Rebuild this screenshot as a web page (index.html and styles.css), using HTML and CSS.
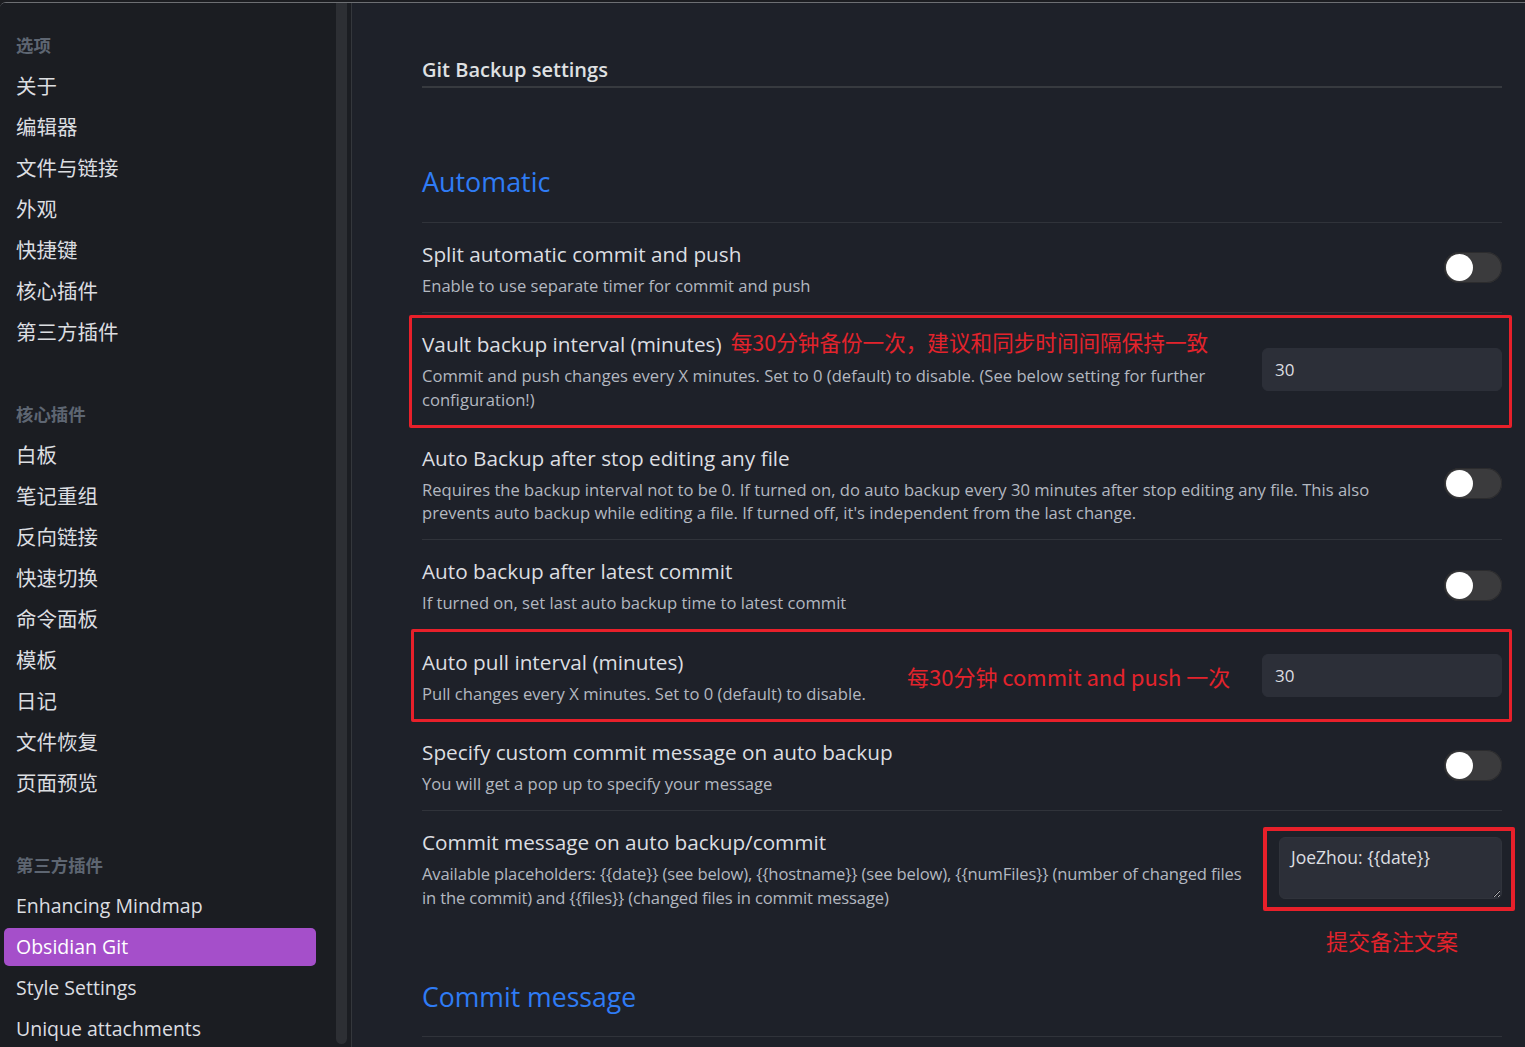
FILE: index.html
```html
<!DOCTYPE html>
<html lang="zh-CN">
<head>
<meta charset="utf-8">
<title>Git Backup settings</title>
<link rel="stylesheet" href="styles.css">
</head>
<body>
<div class="window">
  <aside class="sidebar">
    <nav class="nav">
      <div class="group">
        <div class="group-title">选项</div>
        <div class="item">关于</div>
        <div class="item">编辑器</div>
        <div class="item">文件与链接</div>
        <div class="item">外观</div>
        <div class="item">快捷键</div>
        <div class="item">核心插件</div>
        <div class="item">第三方插件</div>
      </div>
      <div class="group">
        <div class="group-title">核心插件</div>
        <div class="item">白板</div>
        <div class="item">笔记重组</div>
        <div class="item">反向链接</div>
        <div class="item">快速切换</div>
        <div class="item">命令面板</div>
        <div class="item">模板</div>
        <div class="item">日记</div>
        <div class="item">文件恢复</div>
        <div class="item">页面预览</div>
      </div>
      <div class="group">
        <div class="group-title">第三方插件</div>
        <div class="item latin">Enhancing Mindmap</div>
        <div class="item latin active">Obsidian Git</div>
        <div class="item latin">Style Settings</div>
        <div class="item latin">Unique attachments</div>
      </div>
    </nav>
    <div class="scroll-track"><div class="scroll-thumb"></div></div>
  </aside>

  <main class="content">
    <h2 class="page-title">Git Backup settings</h2>

    <h3 class="section-title first">Automatic</h3>

    <div class="setting">
      <div class="info">
        <div class="name">Split automatic commit and push</div>
        <div class="desc">Enable to use separate timer for commit and push</div>
      </div>
      <div class="control"><div class="toggle"></div></div>
    </div>

    <div class="setting marked mark-vault">
      <div class="info">
        <div class="name">Vault backup interval (minutes)<span class="note inline">每30分钟备份一次，建议和同步时间间隔保持一致</span></div>
        <div class="desc">Commit and push changes every X minutes. Set to 0 (default) to disable. (See below setting for further<br>configuration!)</div>
      </div>
      <div class="control"><input class="text-input" type="text" value="30"></div>
    </div>

    <div class="setting">
      <div class="info">
        <div class="name">Auto Backup after stop editing any file</div>
        <div class="desc">Requires the backup interval not to be 0. If turned on, do auto backup every 30 minutes after stop editing any file. This also<br>prevents auto backup while editing a file. If turned off, it's independent from the last change.</div>
      </div>
      <div class="control"><div class="toggle"></div></div>
    </div>

    <div class="setting">
      <div class="info">
        <div class="name">Auto backup after latest commit</div>
        <div class="desc">If turned on, set last auto backup time to latest commit</div>
      </div>
      <div class="control"><div class="toggle"></div></div>
    </div>

    <div class="setting marked mark-pull">
      <div class="info">
        <div class="name">Auto pull interval (minutes)</div>
        <div class="desc">Pull changes every X minutes. Set to 0 (default) to disable.</div>
      </div>
      <span class="note pull-note">每30分钟 commit and push 一次</span>
      <div class="control"><input class="text-input" type="text" value="30"></div>
    </div>

    <div class="setting">
      <div class="info">
        <div class="name">Specify custom commit message on auto backup</div>
        <div class="desc">You will get a pop up to specify your message</div>
      </div>
      <div class="control"><div class="toggle"></div></div>
    </div>

    <div class="setting">
      <div class="info">
        <div class="name">Commit message on auto backup/commit</div>
        <div class="desc tight">Available placeholders: {{date}} (see below), {{hostname}} (see below), {{numFiles}} (number of changed files<br>in the commit) and {{files}} (changed files in commit message)</div>
      </div>
      <div class="control marked mark-area">
        <textarea class="text-area">JoeZhou: {{date}}</textarea>
        <span class="note area-note">提交备注文案</span>
      </div>
    </div>

    <h3 class="section-title second">Commit message</h3>
    <div class="setting empty"></div>
  </main>
</div>
</body>
</html>
```

FILE: styles.css
```css
* {
  box-sizing: border-box;
}

html,
body {
  margin: 0;
  padding: 0;
  background: #1c1d21;
  height: 100%;
  overflow: hidden;
}

body {
  font-family: "Open Sans", "Noto Sans CJK SC", sans-serif;
  color: #dcdee1;
}

.window {
  margin-top: 2px;
  height: 1045px;
  border-top: 1px solid #6d6f73;
  border-top-left-radius: 6px;
  display: flex;
  overflow: hidden;
  background: #1b1d22;
}

/* ---------- sidebar ---------- */
.sidebar {
  display: flex;
  flex: 0 0 351px;
  background: #1b1d22;
}

.nav {
  width: 336px;
  padding: 28.5px 20px 0 4px;
}

.group + .group {
  margin-top: 49.5px;
}

.group-title {
  padding-left: 12px;
  font-size: 17.4px;
  font-weight: 700;
  line-height: 26px;
  color: #5e6672;
  margin-bottom: 9px;
  font-family: "Noto Sans CJK SC", sans-serif;
}

.item {
  height: 38px;
  line-height: 38px;
  margin-bottom: 3.1px;
  padding-left: 12px;
  font-size: 20.5px;
  color: #dcdee1;
  border-radius: 5px;
  white-space: nowrap;
}

.item.latin {
  font-size: 19.5px;
}

.item.active {
  background: #a54fca;
  color: #ffffff;
}

.scroll-track {
  width: 11px;
  margin-right: 4px;
}

.scroll-thumb {
  width: 11px;
  height: 1041px;
  background: #2d2f34;
  border-radius: 0 0 6px 6px;
}

/* ---------- content ---------- */
.content {
  flex: 1 1 auto;
  background: #1e2129;
  border-left: 1px solid #34373c;
  padding: 53px 23px 0 70px;
  min-width: 0;
}

.page-title {
  margin: 0;
  font-size: 20px;
  font-weight: 600;
  line-height: 28px;
  color: #dfe0e2;
  padding-bottom: 2px;
  border-bottom: 2px solid #373a3f;
}

.section-title {
  margin: 0;
  font-size: 26.9px;
  font-weight: 500;
  line-height: 36px;
  color: #2f7cf5;
  padding-bottom: 22px;
}

.section-title.first {
  margin-top: 76px;
}

.section-title.second {
  font-size: 26.6px;
  margin-top: 55px;
  padding-bottom: 21px;
}

.setting {
  display: flex;
  align-items: center;
  padding: 15px 0;
  border-top: 1px solid #30333a;
  position: relative;
}

.setting.empty {
  height: 60px;
}

.info {
  flex: 1 1 auto;
  min-width: 0;
  margin-right: 16px;
}

.name {
  font-size: 20.75px;
  line-height: 32px;
  color: #dcdee1;
  white-space: nowrap;
}

.desc {
  margin-top: 4px;
  font-size: 16.6px;
  line-height: 23.3px;
  color: #b3b8c0;
  white-space: nowrap;
}

.desc.tight {
  letter-spacing: -0.15px;
}

.control {
  flex: 0 0 auto;
  display: flex;
  justify-content: flex-end;
  position: relative;
}

.toggle {
  position: relative;
  width: 58px;
  height: 31px;
  border-radius: 16px;
  background: #3b3b3d;
  box-shadow: inset 0 0 0 1px #2c2c2e;
}

.toggle::after {
  content: "";
  position: absolute;
  left: 2px;
  top: 2px;
  width: 27px;
  height: 27px;
  border-radius: 50%;
  background: #ffffff;
}

.text-input {
  width: 240px;
  height: 43px;
  margin: 0;
  padding: 0 12px;
  border: 1px solid #2c2f38;
  border-radius: 6px;
  background: #2c2f38;
  color: #dcdee1;
  font-family: "Open Sans", sans-serif;
  font-size: 17px;
  outline: none;
}

.text-area {
  display: block;
  width: 223px;
  height: 62px;
  margin: 0;
  padding: 7px 11px;
  border: 1px solid #30333b;
  border-radius: 6px;
  background: #2c2f38;
  color: #dcdee1;
  font-family: "Open Sans", sans-serif;
  font-size: 17.5px;
  line-height: 24px;
  resize: both;
  outline: none;
}

/* ---------- annotations ---------- */
.note {
  color: #e3232c;
  font-family: "Noto Sans CJK SC", sans-serif;
  font-size: 22px;
  white-space: nowrap;
}

.note.inline {
  font-size: 21.6px;
  margin-left: 9px;
  line-height: 20px;
  vertical-align: 1px;
}

.pull-note {
  position: absolute;
  left: 485px;
  top: 30px;
  line-height: 30px;
}

.area-note {
  position: absolute;
  left: 47px;
  top: 88px;
  line-height: 30px;
}

.marked::after {
  content: "";
  position: absolute;
  z-index: 2;
  border: 3px solid #e8202a;
  border-radius: 2px;
  pointer-events: none;
}

.mark-vault::after {
  top: 2px;
  bottom: -2px;
  left: -13px;
  right: -10px;
}

.mark-pull::after {
  top: -2px;
  bottom: -2px;
  left: -11px;
  right: -10px;
}

.mark-area::after {
  top: -10px;
  bottom: -12px;
  left: -16px;
  right: -13px;
  border-width: 4px;
}
```
